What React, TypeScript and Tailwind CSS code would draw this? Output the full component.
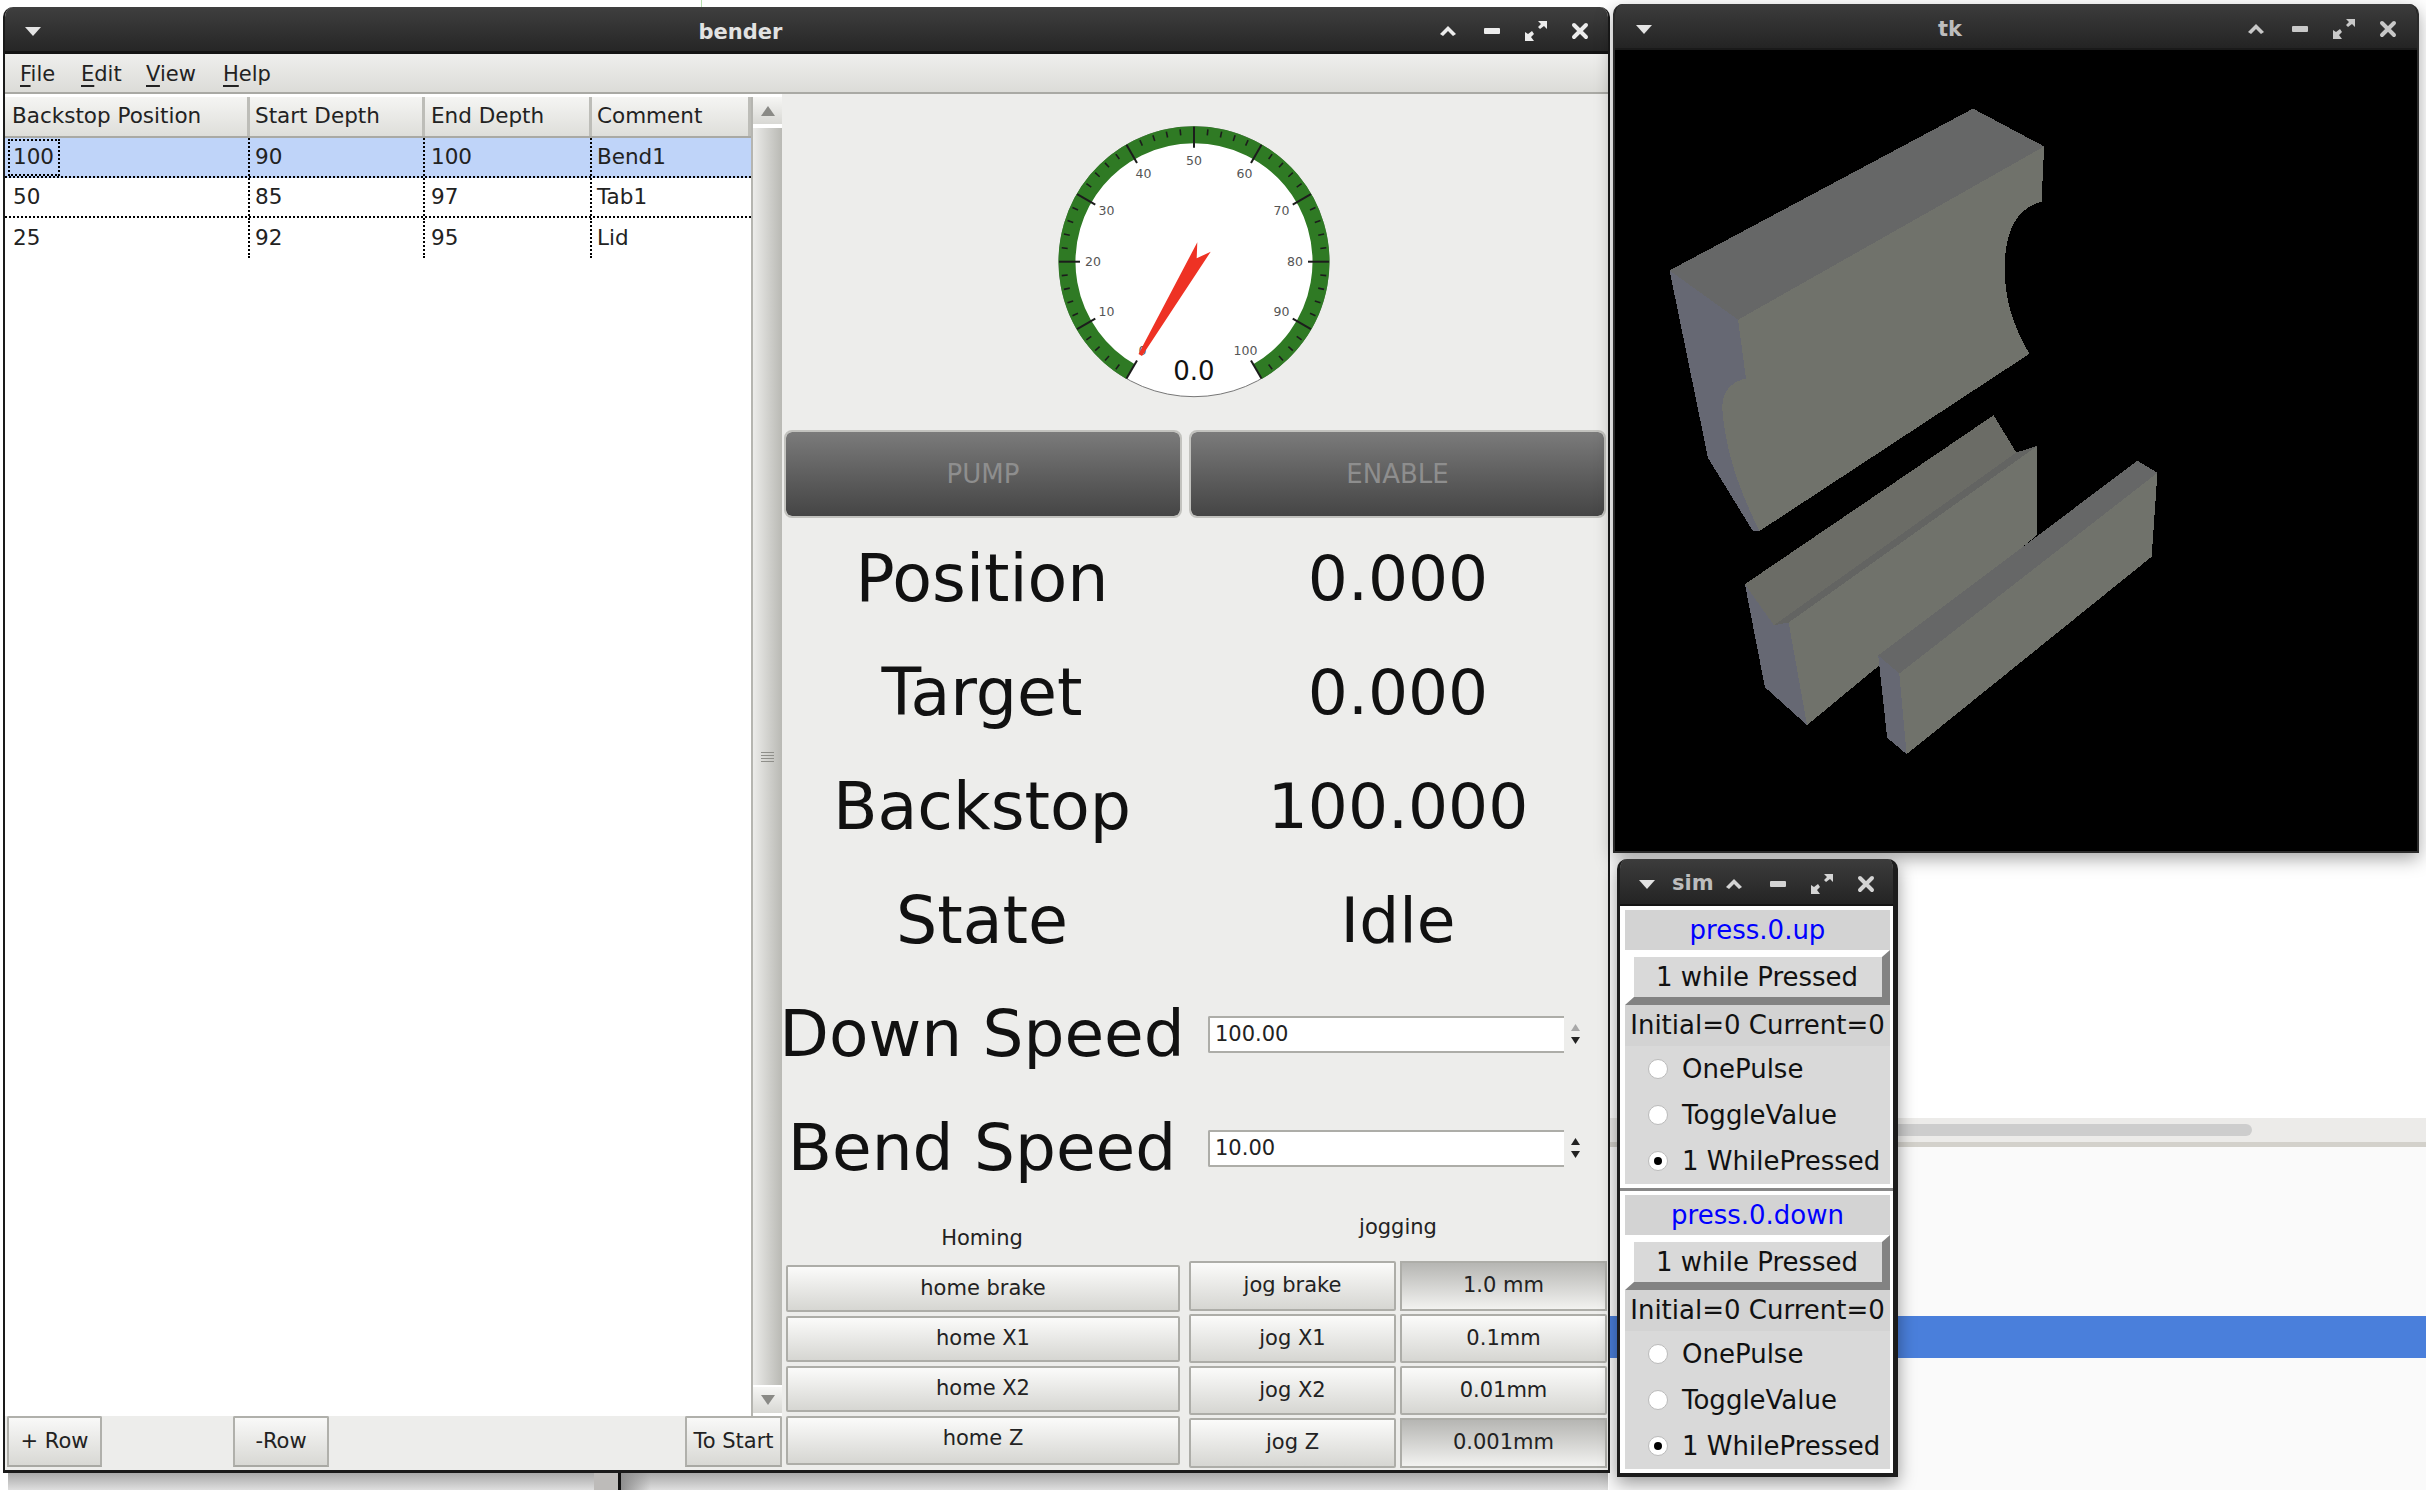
import React from "react";

const pt = (v: number, r: number) => {
  const a = ((-150 + 3 * v) * Math.PI) / 180;
  return [140 + r * Math.sin(a), 139.7 - r * Math.cos(a)];
};

function Gauge() {
  const s = pt(0, 127);
  const e = pt(100, 127);
  const ticks: number[] = [];
  for (let v = 0; v <= 100; v += 2) ticks.push(v);
  return (
    <svg width="280" height="280" viewBox="0 0 280 280" className="block">
      <circle cx="140" cy="139.7" r="135" fill="#fff" stroke="#777" strokeWidth="1" />
      <path d={`M${s[0]} ${s[1]} A127 127 0 1 1 ${e[0]} ${e[1]}`} fill="none" stroke="#2f7a24" strokeWidth="17" />
      {ticks.map((v) => {
        const major = v % 10 === 0;
        const a = pt(v, major ? 114 : 127);
        const b = pt(v, major ? 135 : 133);
        return <line key={v} x1={a[0]} y1={a[1]} x2={b[0]} y2={b[1]} stroke="#1c1c1c" strokeWidth={major ? 2 : 1.6} />;
      })}
      {[0, 10, 20, 30, 40, 50, 60, 70, 80, 90, 100].map((v) => {
        const p = pt(v, v === 0 || v === 100 ? 103 : 101);
        return (
          <text key={v} x={p[0]} y={p[1] + 4} fontSize="12.5" fill="#555" textAnchor="middle">
            {v}
          </text>
        );
      })}
      <polygon points="84.5,232 143.3,120.3 142.7,136.3 156.7,129.7 88,234" fill="#ee3224" />
      <text x="140" y="258" fontSize="26" fill="#111" textAnchor="middle">
        0.0
      </text>
    </svg>
  );
}

function BtnDown() {
  return (
    <svg width="20" height="12" viewBox="0 0 20 12">
      <polygon points="2,2 18,2 10,11" fill="#e4e4e4" />
    </svg>
  );
}
function WinButtons({ color, pr }: { color: string; pr: string }) {
  return (
    <div className={`flex h-full shrink-0 items-center ${pr}`}>
      <div className="flex w-[44px] justify-center">
        <svg width="18" height="12" viewBox="0 0 18 12">
          <polygon points="9,1 17,9 14,11 9,6 4,11 1,9" fill={color} />
        </svg>
      </div>
      <div className="flex w-[44px] justify-center">
        <svg width="16" height="8" viewBox="0 0 16 8">
          <rect x="0" y="1" width="16" height="6" rx="1" fill={color} />
        </svg>
      </div>
      <div className="flex w-[44px] justify-center">
        <svg width="22" height="20" viewBox="0 0 22 20">
          <polygon points="13,0 22,0 22,8 19,5 15,8 13,6 16,3" fill={color} />
          <polygon points="0,20 0,11 3,13 7,10 9,13 6,16 9,20" fill={color} />
        </svg>
      </div>
      <div className="flex w-[44px] justify-center">
        <svg width="18" height="18" viewBox="0 0 18 18">
          <path d="M3 3 L15 15 M15 3 L3 15" stroke={color} strokeWidth="4" strokeLinecap="round" />
        </svg>
      </div>
    </div>
  );
}

function Menu({ first, rest, w }: { first: string; rest: string; w: string }) {
  return (
    <span className={`${w} text-[21px] leading-none text-[#222]`}>
      <span className="underline underline-offset-[4px]">{first}</span>
      {rest}
    </span>
  );
}

const headers = [
  { t: "Backstop Position", w: "w-[245px]", pl: "pl-[7px]" },
  { t: "Start Depth", w: "w-[175px]", pl: "pl-[5px]" },
  { t: "End Depth", w: "w-[167px]", pl: "pl-[6px]" },
  { t: "Comment", w: "w-[159px]", pl: "pl-[5px]" },
];
const rows = [
  ["100", "90", "100", "Bend1"],
  ["50", "85", "97", "Tab1"],
  ["25", "92", "95", "Lid"],
];
const cellW = ["w-[243px]", "w-[175px]", "w-[167px]", "w-[159px]"];

function BottomBtn({ t, w }: { t: string; w: string }) {
  return (
    <div
      className={`${w} flex h-[51px] items-center justify-center rounded-t-[2px] border-x-2 border-b-2 border-t-2 border-[#b0b0ab] border-b-[#a8a8a3] bg-gradient-to-b from-[#f9f9f8] to-[#d8d8d4] text-[21px] text-[#222]`}
    >
      {t}
    </div>
  );
}

function GtkBtn({ t, h, pressed, shift }: { t: string; h: string; pressed?: boolean; shift?: string }) {
  return (
    <div
      className={`${h} flex items-center justify-center border-2 border-[#adada8] text-[21px] text-[#222] ${
        pressed ? "bg-gradient-to-b from-[#b6b6b3] to-[#f2f2f0]" : "rounded-[2px] bg-gradient-to-b from-[#fbfbfa] to-[#d6d6d2]"
      }`}
    >
      <span className={shift}>{t}</span>
    </div>
  );
}

function Spin({ value, upDisabled }: { value: string; upDisabled?: boolean }) {
  return (
    <div className="flex items-center">
      <div className="ml-[18px] flex h-[37px] w-[356px] items-center rounded-l-[2px] border-y-2 border-l-2 border-[#adada8] bg-white pl-[5px] text-[21px] text-[#222]">
        {value}
      </div>
      <div className="ml-[6px] flex w-[10px] flex-col items-center gap-[4px]">
        <svg width="9" height="8" viewBox="0 0 9 8">
          <polygon points="4.5,0 9,7 0,7" fill={upDisabled ? "#a8a8a8" : "#222"} />
        </svg>
        <svg width="9" height="8" viewBox="0 0 9 8">
          <polygon points="0,1 9,1 4.5,8" fill="#222" />
        </svg>
      </div>
    </div>
  );
}

function Radio({ t, on }: { t: string; on?: boolean }) {
  return (
    <div className="flex h-[46px] items-center pl-[23px] text-[26px] text-[#111]">
      <div className="flex h-[20px] w-[20px] items-center justify-center rounded-full border border-[#bbb] bg-white">
        {on && <div className="h-[8px] w-[8px] rounded-full bg-black" />}
      </div>
      <span className="ml-[14px] whitespace-nowrap">{t}</span>
    </div>
  );
}

function SimPanel({ name }: { name: string }) {
  return (
    <div className="h-[282px] border-y-4 border-l-[5px] border-r-[3px] border-white bg-[#d9d9d9]">
      <div className="flex h-[40px] items-center justify-center bg-[#d3d3d3] text-[26px] text-[#0000ff]">{name}</div>
      <div className="h-[55px] border-b-[8px] border-l-[9px] border-r-[8px] border-t-[7px] border-b-[#828282] border-l-white border-r-[#828282] border-t-white">
        <div className="flex h-full items-center justify-center bg-[#d9d9d9] pr-[2px] text-[26px] leading-none text-[#111]">1 while Pressed</div>
      </div>
      <div className="flex h-[41px] items-center justify-center whitespace-nowrap bg-[#d3d3d3] text-[26px] text-[#111]">
        Initial=0 Current=0
      </div>
      <Radio t="OnePulse" />
      <Radio t="ToggleValue" />
      <Radio t="1 WhilePressed" on />
    </div>
  );
}

export default function App() {
  return (
    <div className="relative h-[1490px] w-[2426px] overflow-hidden bg-white font-['DejaVu_Sans',sans-serif]">
      {/* desktop behind the windows */}
      <div className="absolute left-[701px] top-0 h-[8px] w-[1px] bg-[#b8e0b0]" />
      <div className="absolute left-[1609px] top-[1118px] h-[24px] w-[817px] bg-[#ecebe9]">
        <div className="ml-[200px] mt-[6px] h-[12px] w-[443px] rounded-full bg-[#cdcdcd]" />
      </div>
      <div className="absolute left-[1609px] top-[1142px] h-[348px] w-[817px] border-t-[5px] border-[#d3d1cb] bg-[#fafafa]" />
      <div className="absolute left-[1609px] top-[1316px] h-[42px] w-[817px] bg-[#4a7fdb]" />
      <div className="absolute left-[8px] top-[1473px] h-[17px] w-[1600px] bg-gradient-to-b from-[#a9a9a9] to-[#dedede]" />
      <div className="absolute left-[594px] top-[1473px] h-[17px] w-[25px] bg-[#bdbbb9]" />
      <div className="absolute left-[621px] top-[1473px] h-[17px] w-[30px] bg-gradient-to-r from-[#8e8e8e] to-[#8e8e8e00]" />
      <div className="absolute left-[618px] top-[1473px] h-[17px] w-[3px] bg-[#111]" />

      {/* bender window */}
      <div className="absolute left-[3px] top-[7px] flex h-[1466px] w-[1607px] flex-col overflow-hidden rounded-t-[10px] border-x-2 border-b-[3px] border-[#1a1a1a]">
        <div className="flex h-[47px] shrink-0 items-center border-b-[3px] border-[#141414] bg-gradient-to-b from-[#3f3f3f] to-[#262626] pt-[4px]">
          <div className="flex w-[50px] shrink-0 pl-[18px]">
            <BtnDown />
          </div>
          <div className="flex-1 translate-y-[2px] text-center text-[21px] font-bold text-[#e2e2e2]">bender</div>
          <WinButtons color="#ececec" pr="pr-[6px]" />
        </div>
        <div className="flex h-[40px] shrink-0 items-center border-b-2 border-[#a9a9a4] bg-gradient-to-b from-[#efefed] to-[#dcdcd8] pl-[15px] pt-[2px]">
          <Menu first="F" rest="ile" w="w-[61px]" />
          <Menu first="E" rest="dit" w="w-[65px]" />
          <Menu first="V" rest="iew" w="w-[77px]" />
          <Menu first="H" rest="elp" w="w-[60px]" />
        </div>
        <div className="flex min-h-0 flex-1 bg-[#ededeb]">
          {/* left */}
          <div className="flex w-[777px] shrink-0 flex-col">
            <div className="flex min-h-0 flex-1 bg-white pt-[3px]">
              <div className="flex w-[746px] shrink-0 flex-col">
                <div className="flex h-[41px] shrink-0 border-b-2 border-[#a9a9a4] bg-gradient-to-b from-[#f5f5f3] to-[#dededa]">
                  {headers.map((h) => (
                    <div key={h.t} className={`${h.w} ${h.pl} flex items-center whitespace-nowrap border-r-[3px] border-[#bdbdb8] text-[21.5px] text-[#222]`}>
                      {h.t}
                    </div>
                  ))}
                </div>
                {rows.map((r, i) => (
                  <div key={i} className={`flex h-[40px] shrink-0 pl-[2px] ${i === 0 ? "bg-[#bfd4f9]" : "bg-white"} ${i < 2 ? "border-b-2 border-dotted border-black" : ""}`}>
                    {r.map((c, j) => (
                      <div key={j} className={`${cellW[j]} ${j === 1 || j === 3 ? "pl-[5px]" : "pl-[6px]"} flex items-center whitespace-nowrap border-r-2 border-dotted border-black text-[21.5px] text-[#222] last:border-r-0`}>
                        {i === 0 && j === 0 ? (
                          <span className="-ml-[5px] flex h-[37px] w-[52px] items-center border-2 border-dotted border-black pl-[3px]">{c}</span>
                        ) : (
                          c
                        )}
                      </div>
                    ))}
                  </div>
                ))}
              </div>
              <div className="flex w-[31px] shrink-0 flex-col border-l-2 border-[#b5b5b0] bg-white">
                <div className="flex h-[27px] shrink-0 items-center justify-center bg-gradient-to-b from-[#f6f6f4] to-[#d8d8d4]">
                  <svg width="14" height="10" viewBox="0 0 14 10">
                    <polygon points="7,0 14,10 0,10" fill="#8a8a86" />
                  </svg>
                </div>
                <div className="mt-[4px] flex min-h-0 flex-1 items-center justify-center bg-gradient-to-r from-[#ececea] to-[#b9b9b4]">
                  <div className="flex flex-col gap-[2px]">
                    <div className="h-[1px] w-[13px] bg-[#8f8f8a]" />
                    <div className="h-[1px] w-[13px] bg-[#8f8f8a]" />
                    <div className="h-[1px] w-[13px] bg-[#8f8f8a]" />
                    <div className="h-[1px] w-[13px] bg-[#8f8f8a]" />
                  </div>
                </div>
                <div className="mt-[2px] flex h-[26px] shrink-0 items-center justify-center bg-gradient-to-b from-[#f6f6f4] to-[#d8d8d4]">
                  <svg width="14" height="10" viewBox="0 0 14 10">
                    <polygon points="0,0 14,0 7,10" fill="#8a8a86" />
                  </svg>
                </div>
                <div className="h-[3px] shrink-0" />
              </div>
            </div>
            <div className="flex h-[54px] shrink-0 items-start justify-between pl-[2px]">
              <div className="flex">
                <BottomBtn t="+ Row" w="w-[95px]" />
                <div className="w-[131px]" />
                <BottomBtn t="-Row" w="w-[96px]" />
              </div>
              <BottomBtn t="To Start" w="w-[97px]" />
            </div>
          </div>
          {/* right */}
          <div className="flex min-w-0 flex-1 flex-col pl-[4px] pr-[1px]">
            <div className="flex justify-center pb-[30px] pr-[6px] pt-[28px]">
              <Gauge />
            </div>
            <div className="flex shrink-0 gap-[11px]">
              <div className="flex h-[84px] w-[394px] items-center justify-center rounded-[6px] bg-gradient-to-b from-[#7b7b7b] to-[#454545] text-[26px] text-[#8e8e8e] outline outline-2 outline-[#c2c2be]">PUMP</div>
              <div className="flex h-[84px] w-[413px] items-center justify-center rounded-[6px] bg-gradient-to-b from-[#7b7b7b] to-[#454545] text-[26px] text-[#8e8e8e] outline outline-2 outline-[#c2c2be]">ENABLE</div>
            </div>
            <div className="-ml-[4px] mt-[5px] grid shrink-0 grid-cols-[400px_416px] gap-x-[8px] text-[63px] leading-none text-[#111]">
              {[
                ["Position", "0.000"],
                ["Target", "0.000"],
                ["Backstop", "100.000"],
                ["State", "Idle"],
              ].map(([a, b]) => (
                <React.Fragment key={a}>
                  <div className="flex h-[114px] items-center justify-center whitespace-nowrap text-[65px]">{a}</div>
                  <div className="flex h-[114px] items-center justify-center whitespace-nowrap">{b}</div>
                </React.Fragment>
              ))}
              <div className="flex h-[114px] items-center justify-center whitespace-nowrap text-[64.5px]">Down Speed</div>
              <div className="flex h-[114px] items-center">
                <Spin value="100.00" upDisabled />
              </div>
              <div className="flex h-[114px] items-center justify-center whitespace-nowrap text-[64.5px]">Bend Speed</div>
              <div className="flex h-[114px] items-center">
                <Spin value="10.00" />
              </div>
            </div>
            <div className="flex min-h-0 flex-1 gap-[9px]">
              <div className="flex w-[394px] shrink-0 flex-col">
                <div className="flex h-[60px] shrink-0 items-center justify-center pr-[2px] pt-[7px] text-[21px] text-[#222]">Homing</div>
                <div className="flex flex-col gap-[4px]">
                  <GtkBtn t="home brake" h="h-[47px]" />
                  <GtkBtn t="home X1" h="h-[46px]" />
                  <GtkBtn t="home X2" h="h-[46px]" />
                  <GtkBtn t="home Z" h="h-[49px]" shift="-translate-y-[2px]" />
                </div>
              </div>
              <div className="flex min-w-0 flex-1 flex-col">
                <div className="flex h-[56px] shrink-0 items-center justify-center pb-[10px] text-[21px] text-[#222]">jogging</div>
                <div className="grid grid-cols-2 gap-x-[4px] gap-y-[3px]">
                  <GtkBtn t="jog brake" h="h-[50px]" />
                  <GtkBtn t="1.0 mm" h="h-[50px]" pressed />
                  <GtkBtn t="jog X1" h="h-[49px]" />
                  <GtkBtn t="0.1mm" h="h-[49px]" />
                  <GtkBtn t="jog X2" h="h-[49px]" />
                  <GtkBtn t="0.01mm" h="h-[49px]" />
                  <GtkBtn t="jog Z" h="h-[50px]" />
                  <GtkBtn t="0.001mm" h="h-[50px]" pressed />
                </div>
              </div>
            </div>
          </div>
        </div>
      </div>

      {/* tk window */}
      <div className="absolute left-[1613px] top-[4px] flex h-[849px] w-[806px] flex-col overflow-hidden rounded-t-[10px] border-x-2 border-b-2 border-[#2b2b2b] bg-black shadow-[0_6px_18px_rgba(0,0,0,0.35)]">
        <div className="flex h-[46px] shrink-0 items-center border-b-2 border-[#1a1a1a] bg-gradient-to-b from-[#3c3c3c] to-[#242424] pt-[5px]">
          <div className="flex w-[51px] shrink-0 pl-[19px]">
            <BtnDown />
          </div>
          <div className="flex-1 translate-y-[1px] text-center text-[21px] font-bold text-[#bdbdbd]">tk</div>
          <WinButtons color="#c8c8c8" pr="pr-[7px]" />
        </div>
        <svg className="block min-h-0 flex-1" width="802" height="801" viewBox="0 0 802 801">
          <g transform="translate(-15,-50) scale(0.5269,0.5485)" shapeRendering="crispEdges">
            <polygon points="132,493 708,198 843,267 262,583" fill="#666767" />
            <path d="M132 493 L262 583 L277 690 Q232 700 232 745 Q240 850 303 968 L290 968 L205 835 Z" fill="#666873" />
            <path d="M262 583 L843 267 L838 368 Q768 385 768 490 Q768 570 815 645 L303 968 Q240 850 232 745 Q232 700 277 690 Z" fill="#70726b" />
            <polygon points="275,1065 747,757 790,825 330,1140" fill="#6b6c66" />
            <polygon points="330,1140 790,825 830,813 358,1135" fill="#636462" />
            <polygon points="358,1135 830,813 830,975 393,1322" fill="#70726b" />
            <polygon points="275,1065 330,1140 358,1135 393,1322 313,1253" fill="#666873" />
            <polygon points="528,1195 1020,840 1058,862 568,1228" fill="#666767" />
            <polygon points="568,1228 1058,862 1047,1015 582,1375" fill="#70726b" />
            <polygon points="528,1195 568,1228 582,1375 545,1345" fill="#666873" />
          </g>
        </svg>
      </div>

      {/* sim window */}
      <div className="absolute left-[1617px] top-[859px] flex h-[618px] w-[281px] flex-col overflow-hidden rounded-t-[10px] border-b-[4px] border-l-[3px] border-r-[5px] border-[#1c1c1c] bg-[#888] shadow-[0_6px_18px_rgba(0,0,0,0.4)]">
        <div className="flex h-[47px] shrink-0 items-center border-b-2 border-[#141414] bg-gradient-to-b from-[#3c3c3c] to-[#242424] pt-[4px]">
          <div className="flex w-[49px] shrink-0 pl-[17px]">
            <BtnDown />
          </div>
          <div className="min-w-0 flex-1 whitespace-nowrap pl-[3px] text-[21px] font-bold text-[#bdbdbd]">sim</div>
          <WinButtons color="#d4d4d4" pr="pr-[5px]" />
        </div>
        <div className="flex flex-col gap-[3px]">
          <SimPanel name="press.0.up" />
          <SimPanel name="press.0.down" />
        </div>
      </div>
    </div>
  );
}
